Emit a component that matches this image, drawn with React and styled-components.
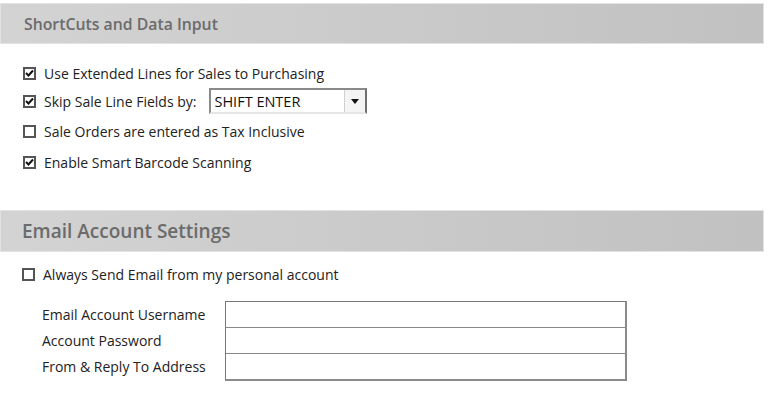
import React from 'react';
import styled, { createGlobalStyle } from 'styled-components';

const GlobalStyle = createGlobalStyle`
  body {
    margin: 0;
    background: #fff;
    font-family: 'Open Sans', 'Noto Sans', sans-serif;
  }
`;

const shortcutOptions = [
  { label: 'Use Extended Lines for Sales to Purchasing', checked: true, h: 28 },
  { label: 'Skip Sale Line Fields by:', checked: true, select: 'SHIFT ENTER', h: 28 },
  { label: 'Sale Orders are entered as Tax Inclusive', checked: false, h: 32 },
  { label: 'Enable Smart Barcode Scanning', checked: true, h: 30 },
];

const emailFields = ['Email Account Username', 'Account Password', 'From & Reply To Address'];

function CheckBox({ checked }) {
  return (
    <Box>
      {checked && (
        <svg width="9" height="8" viewBox="0 0 9 8">
          <path d="M1 4 L3.5 6.5 L8 1.5" fill="none" stroke="#111" strokeWidth="2" />
        </svg>
      )}
    </Box>
  );
}

function App() {
  return (
    <Page>
      <GlobalStyle />
      <Header>
        <Title>ShortCuts and Data Input</Title>
      </Header>
      <Options>
        {shortcutOptions.map((opt) => (
          <OptionRow key={opt.label} h={opt.h}>
            <CheckBox checked={opt.checked} />
            <Label>{opt.label}</Label>
            {opt.select && (
              <Select>
                <SelectText>{opt.select}</SelectText>
                <SelectButton>
                  <svg width="8" height="5" viewBox="0 0 8 5">
                    <path d="M0 0 H8 L4 5 Z" fill="#111" />
                  </svg>
                </SelectButton>
              </Select>
            )}
          </OptionRow>
        ))}
      </Options>

      <Header big>
        <Title big>Email Account Settings</Title>
      </Header>
      <EmailSection>
        <OptionRow h={26}>
          <CheckBox checked={false} />
          <Label>Always Send Email from my personal account</Label>
        </OptionRow>
        <FieldGrid>
          <FieldLabels>
            {emailFields.map((f) => (
              <FieldLabel key={f}>{f}</FieldLabel>
            ))}
          </FieldLabels>
          <Inputs>
            {emailFields.map((f) => (
              <Input key={f} />
            ))}
          </Inputs>
        </FieldGrid>
      </EmailSection>
    </Page>
  );
}

export default App;

/* Style */
const Page = styled.div`
  width: 770px;
  height: 398px;
  padding-top: 3px;
  box-sizing: border-box;
  overflow: hidden;
`;

const Header = styled.div`
  width: 764px;
  height: ${(p) => (p.big ? '42px' : '41px')};
  box-sizing: border-box;
  border: 1px solid #e2e2e2;
  background: linear-gradient(to right, #d3d3d3, #c1c1c1);
  display: flex;
  align-items: center;
  padding-left: ${(p) => (p.big ? '21px' : '23px')};
`;

const Title = styled.div`
  font-size: ${(p) => (p.big ? '19px' : '15.8px')};
  font-weight: 600;
  color: #6b6b6b;
  white-space: nowrap;
`;

const Options = styled.div`
  display: flex;
  flex-direction: column;
  padding: 15px 0 0 23px;
  height: 166px;
  box-sizing: border-box;
`;

const OptionRow = styled.div`
  display: flex;
  align-items: center;
  height: ${(p) => p.h}px;
`;

const Box = styled.span`
  width: 13px;
  height: 13px;
  box-sizing: border-box;
  border: 2px solid #555;
  background: #fff;
  display: inline-flex;
  align-items: center;
  justify-content: center;
  flex-shrink: 0;
`;

const Label = styled.span`
  margin-left: 8px;
  font-size: 14px;
  color: #222;
  white-space: nowrap;
`;

const Select = styled.div`
  margin-left: 13px;
  width: 158px;
  height: 26px;
  box-sizing: border-box;
  border: 2px solid #8a8a8a;
  border-right-color: #6f6f6f;
  border-bottom-color: #e6e6e6;
  display: flex;
  align-items: stretch;
  background: #fff;
`;

const SelectText = styled.span`
  flex: 1;
  font-size: 14.5px;
  color: #111;
  padding-left: 3px;
  display: flex;
  align-items: center;
`;

const SelectButton = styled.span`
  width: 20px;
  border-left: 1px solid #d0d0d0;
  background: #f4f4f4;
  display: flex;
  align-items: center;
  justify-content: center;
`;

const EmailSection = styled.div`
  padding: 9px 0 0 22px;
`;

const FieldGrid = styled.div`
  display: flex;
  margin-top: 14px;
  margin-left: 20px;
`;

const FieldLabels = styled.div`
  display: flex;
  flex-direction: column;
  width: 183px;
`;

const FieldLabel = styled.div`
  height: 26px;
  display: flex;
  align-items: center;
  font-size: 14px;
  color: #222;
  white-space: nowrap;
`;

const Inputs = styled.div`
  width: 402px;
  box-sizing: border-box;
  display: flex;
  flex-direction: column;
  border: 1px solid #777;
  border-right: 2px solid #8a8a8a;
  border-bottom: 2px solid #8a8a8a;
`;

const Input = styled.div`
  height: 25px;
  background: #fff;
  & + & {
    border-top: 1px solid #888;
  }
`;
